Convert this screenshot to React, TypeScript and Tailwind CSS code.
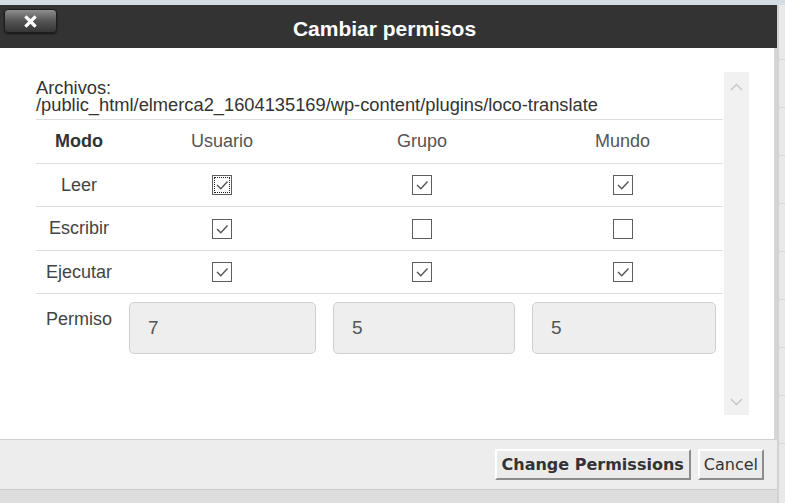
import React from "react";

const Check = ({ checked, focused }: { checked: boolean; focused?: boolean }) => (
  <span className="relative inline-flex w-[20px] h-[20px] border-[1.5px] border-[#5e5e5e] bg-white items-center justify-center">
    {focused && <span className="absolute inset-[1px] border border-dotted border-[#222]" />}
    {checked && (
      <svg width="16" height="16" viewBox="0 0 16 16" className="relative">
        <polyline points="3,8 6.8,11.8 13.5,4.5" fill="none" stroke="#555" strokeWidth="1.4" />
      </svg>
    )}
  </span>
);

const rows = [
  { label: "Leer", vals: [true, true, true], h: "h-[43px]" },
  { label: "Escribir", vals: [true, false, false], h: "h-[44px]" },
  { label: "Ejecutar", vals: [true, true, true], h: "h-[43px]" },
];

const Chevron = ({ up }: { up?: boolean }) => (
  <svg width="13" height="8" viewBox="0 0 13 8">
    <polyline
      points={up ? "1,7 6.5,1.5 12,7" : "1,1 6.5,6.5 12,1"}
      fill="none"
      stroke="#c4c4c4"
      strokeWidth="1.3"
    />
  </svg>
);

export default function App() {
  return (
    <div className="w-[785px] h-[503px] bg-[#dedede] flex flex-col overflow-hidden font-['Liberation_Sans',Arial,sans-serif]">
      <div className="h-[5px] shrink-0 bg-[#d3dde4]" />
      <div className="flex flex-1 min-h-0">
        <div className="w-[777px] shrink-0 flex flex-col">
          {/* Title bar */}
          <div className="h-[43px] bg-[#333333] grid grid-cols-[60px_1fr_68px]">
            <div className="pt-[4px] pl-[4px]">
              <button className="w-[53px] h-[24px] rounded-[4px] border border-[#1e1e1e] bg-gradient-to-b from-[#8e8e8e] via-[#555] to-[#363636] shadow-[0_1px_2px_rgba(0,0,0,0.6)] flex items-center justify-center">
                <svg width="13" height="13" viewBox="0 0 13 13">
                  <path d="M2.5 2.5 L10.5 10.5 M10.5 2.5 L2.5 10.5" stroke="#fff" strokeWidth="3.2" strokeLinecap="square" />
                </svg>
              </button>
            </div>
            <div className="flex items-center justify-center pt-[5px] text-white font-bold text-[21px]">
              Cambiar permisos
            </div>
            <div />
          </div>

          {/* Body */}
          <div className="h-[391px] bg-white border-r-[3px] border-[#d6d6d6] flex">
            <div className="w-[723px] pl-[36px] pt-[31px] text-[18px] text-[#333]">
              <div className="leading-[17px] mb-[6px] text-[18.3px]">
                <div>Archivos:</div>
                <div>/public_html/elmerca2_1604135169/wp-content/plugins/loco-translate</div>
              </div>
              <div className="border-t border-[#dddddd]">
                <div className="grid grid-cols-[86px_200px_200px_201px] h-[44px] items-center text-center border-b border-[#dddddd]">
                  <div className="font-bold text-[#333]">Modo</div>
                  <div className="text-[#555]">Usuario</div>
                  <div className="text-[#555]">Grupo</div>
                  <div className="text-[#555]">Mundo</div>
                </div>
                {rows.map((r, i) => (
                  <div
                    key={r.label}
                    className={`grid grid-cols-[86px_200px_200px_201px] ${r.h} items-center text-center border-b border-[#dddddd]`}
                  >
                    <div className="text-[#444]">{r.label}</div>
                    {r.vals.map((v, j) => (
                      <div key={j} className="flex justify-center">
                        <Check checked={v} focused={i === 0 && j === 0} />
                      </div>
                    ))}
                  </div>
                ))}
                <div className="grid grid-cols-[86px_200px_200px_201px] pt-[8px]">
                  <div className="text-center text-[#444] pt-[4px]">Permiso</div>
                  {["7", "5", "5"].map((v, j) => (
                    <div
                      key={j}
                      className={
                        j === 0 ? "pl-[7px] pr-[6px]" : j === 1 ? "pl-[11px] pr-[7px]" : "pl-[10px] pr-[7px]"
                      }
                    >
                      <div className="h-[52px] rounded-[5px] border border-[#cfcfcf] bg-[#eeeeee] flex items-center pl-[18px] text-[19px] text-[#555]">
                        {v}
                      </div>
                    </div>
                  ))}
                </div>
              </div>
            </div>
            <div className="w-[25px] ml-[1px] my-[24px] bg-[#f1f1f1] flex flex-col items-center justify-between pt-[11px] pb-[9px]">
              <Chevron up />
              <Chevron />
            </div>
          </div>

          {/* Footer */}
          <div className="h-[51px] bg-[#ededed] border-t border-b border-t-[#cfcfcf] border-b-[#cacaca] flex justify-end items-start pt-[9px] pr-[13px] gap-[7px] font-['DejaVu_Sans',Verdana,sans-serif] text-[16px] text-[#333]">
            <button className="h-[31px] px-[5px] bg-[#ebebeb] border-2 border-t-white border-l-white border-r-[#8c8c8c] border-b-[#8c8c8c] font-bold">
              Change Permissions
            </button>
            <button className="h-[31px] px-[4px] bg-[#ebebeb] border-2 border-t-white border-l-white border-r-[#8c8c8c] border-b-[#8c8c8c]">
              Cancel
            </button>
          </div>
        </div>

        {/* Background table peeking out on the right */}
        <div className="flex-1 border-l-2 border-[#d2d2d2] bg-[#e9e9e9] flex flex-col">
          <div className="h-[54px] shrink-0" />
          {Array.from({ length: 9 }).map((_, i) => (
            <div key={i} className="h-[48px] shrink-0 border-t border-[#d6d6d6]" />
          ))}
        </div>
      </div>
    </div>
  );
}
